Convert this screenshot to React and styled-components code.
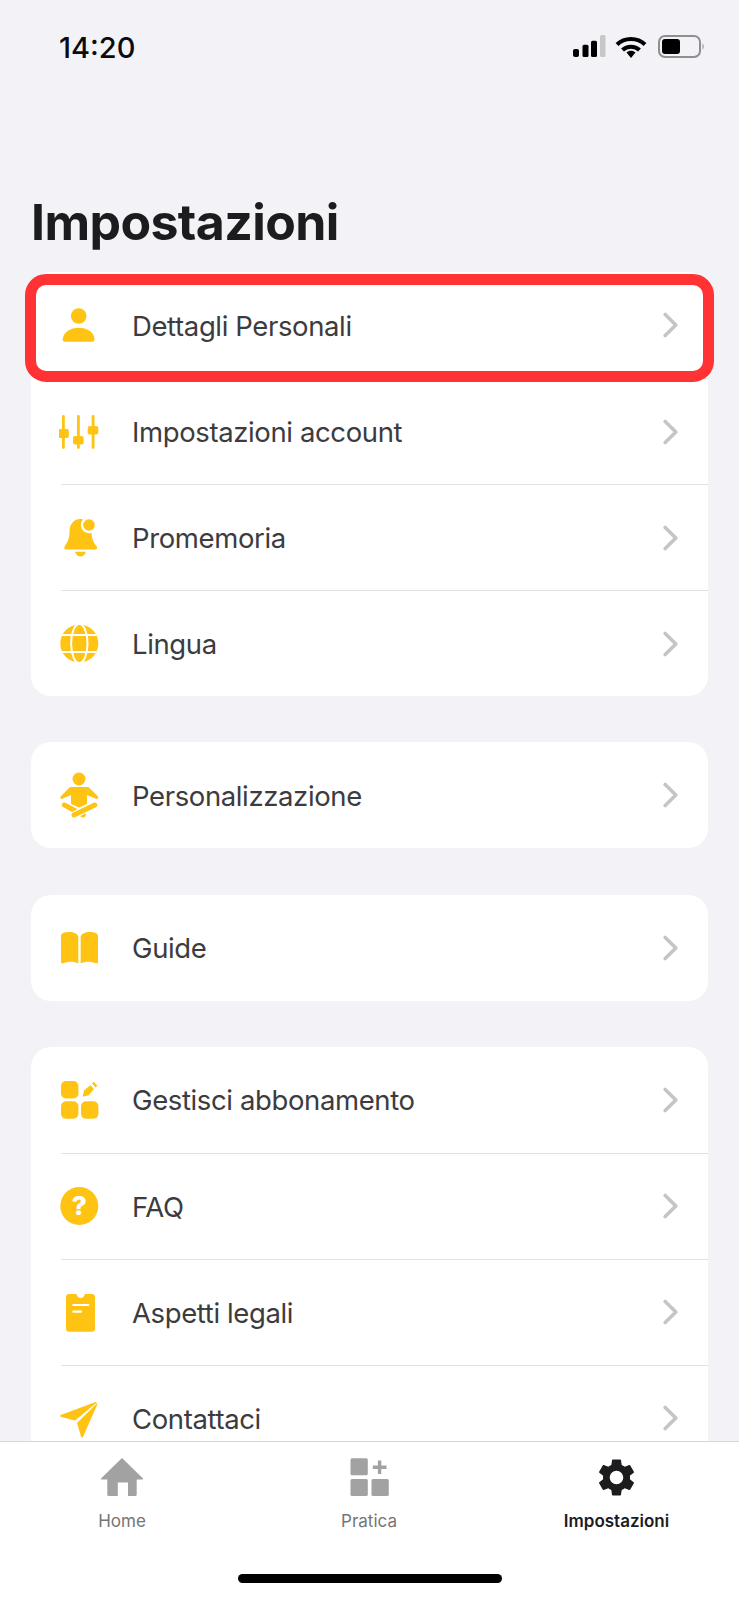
import React from 'react';
import styled, { createGlobalStyle } from 'styled-components';
import { MdSettings } from 'react-icons/md';

const yellow = '#ffc313';

const GlobalStyle = createGlobalStyle`
  html, body {
    margin: 0;
    padding: 0;
    background: #f2f2f7;
  }
  * { box-sizing: border-box; }
`;

const Screen = styled.div`
  width: 739px;
  height: 1600px;
  display: flex;
  flex-direction: column;
  overflow: hidden;
  background: #f2f2f7;
  font-family: Inter, "Liberation Sans", sans-serif;
`;

const StatusBar = styled.div`
  height: 94px;
  flex: none;
  display: flex;
  align-items: center;
  justify-content: space-between;
  padding: 0 34px 0 59px;
`;

const Time = styled.span`
  font-size: 29px;
  font-weight: 500;
  color: #0c0c0e;
`;

const StatusIcons = styled.div`
  display: flex;
  align-items: center;
  gap: 9px;
`;

const BatteryIcon = styled.svg`
  margin-left: 2px;
`;

const Header = styled.div`
  height: 178px;
  flex: none;
  padding: 97px 0 0 31px;
`;

const Title = styled.h1`
  margin: 0;
  font-size: 50px;
  line-height: 62px;
  font-weight: 700;
  letter-spacing: -0.6px;
  color: #1c1c1e;
`;

const List = styled.div`
  flex: 1;
  min-height: 0;
  overflow: hidden;
  padding: 0 31px;
  display: flex;
  flex-direction: column;
  gap: 46.25px;
`;

const Card = styled.div`
  position: relative;
  flex: none;
  background: #fff;
  border-radius: 20px;
`;

const Row = styled.div`
  height: 106px;
  margin-left: 30px;
  display: flex;
  align-items: center;
  padding-right: 30px;

  & + & {
    border-top: 1.5px solid #e2e2e4;
  }
`;

const IconSlot = styled.svg`
  width: 40px;
  height: 48px;
  flex: none;
  margin-left: -2px;
  fill: ${yellow};
`;

const Label = styled.span`
  flex: 1;
  margin-left: 33px;
  padding-top: 1px;
  font-size: 27.5px;
  letter-spacing: -0.38px;
  color: #3c3c3f;
`;

const Chevron = styled.svg`
  width: 15px;
  height: 26px;
  flex: none;
`;

const Highlight = styled.div`
  position: absolute;
  top: 2px;
  left: -6px;
  right: -6px;
  height: 108px;
  border: 11px solid #ff3333;
  border-radius: 21px;
`;

const TabBar = styled.div`
  flex: none;
  height: 159px;
  background: #fff;
  border-top: 1.5px solid #d6d6d9;
`;

const Tabs = styled.div`
  display: grid;
  grid-template-columns: 244px 250px 245px;
  padding-top: 15px;
`;

const Tab = styled.div`
  display: flex;
  flex-direction: column;
  align-items: center;
  color: ${(p) => (p.$active ? '#1c1c1e' : '#a2a2a2')};
`;

const TabIcon = styled.svg`
  width: 44px;
  height: 40px;
  fill: currentColor;
`;

const GearWrap = styled.div`
  height: 40px;
  display: flex;
  align-items: center;
  justify-content: center;
  font-size: 45px;
`;

const TabLabel = styled.span`
  margin-top: 14px;
  font-size: 17px;
  line-height: 20px;
  font-weight: ${(p) => (p.$active ? 600 : 400)};
  color: ${(p) => (p.$active ? '#1c1c1e' : '#757575')};
`;

const HomeIndicator = styled.div`
  width: 264px;
  height: 9px;
  margin: 43px auto 0;
  border-radius: 5px;
  background: #000;
`;

const Signal = () => (
  <svg width="33" height="24" viewBox="0 0 33 24">
    <rect x="0" y="14" width="6" height="8" rx="2" fill="#000" />
    <rect x="9.5" y="9.7" width="6" height="12.3" rx="1.5" fill="#000" />
    <rect x="18" y="5.7" width="6" height="16.3" rx="1.5" fill="#000" />
    <rect x="27" y="0" width="5.5" height="22" rx="1.5" fill="#c7c7c9" />
  </svg>
);

const Wifi = () => (
  <svg width="32" height="24" viewBox="0 0 32 24" fill="none" stroke="#000" strokeWidth="4">
    <path d="M2 9.5 C9.5 2 22.5 2 30 9.5" />
    <path d="M7.5 15 C12 10.5 20 10.5 24.5 15" />
    <path d="M11.5 17.5 L16 23 L20.5 17.5 C18 15.3 14 15.3 11.5 17.5Z" fill="#000" stroke="none" />
  </svg>
);

const Battery = () => (
  <BatteryIcon width="47" height="24" viewBox="0 0 47 24">
    <rect x="1" y="1" width="41" height="21" rx="6" fill="none" stroke="#8e8e93" strokeWidth="2" />
    <rect x="4" y="4" width="18" height="15" rx="3" fill="#000" />
    <path d="M44.5 8.5 C46 9.5 46 13.5 44.5 14.5Z" fill="#8e8e93" />
  </BatteryIcon>
);

const icons = {
  person: (
    <>
      <circle cx="19.7" cy="15" r="7.8" />
      <path d="M3.7 38 C4.5 31 11.5 26.7 19.7 26.7 C28 26.7 35 31 35.5 38 C35.6 39.8 34.8 40.7 33 40.7 H6 C4.4 40.7 3.5 39.8 3.7 38Z" />
    </>
  ),
  sliders: (
    <>
      <rect x="3" y="7" width="2.8" height="34" rx="1.4" />
      <rect x="18" y="7" width="2.8" height="34" rx="1.4" />
      <rect x="32.7" y="7" width="2.8" height="34" rx="1.4" />
      <rect x="-0.8" y="21" width="10.6" height="9" rx="2" />
      <rect x="14" y="28" width="10.6" height="8.5" rx="2" />
      <rect x="28.7" y="18" width="10.6" height="8.5" rx="2" />
    </>
  ),
  bell: (
    <>
      <path d="M21.5 5 C14 5 10.5 11 10.5 18 C10.5 25 8 29 5.8 32.2 C4.8 33.8 5.4 35.6 7 35.6 H36.5 C38 35.6 38.6 33.8 37.6 32.2 C35 29 32.5 25 32.5 18 C32.5 11 29 5 21.5 5Z" />
      <path d="M16 37.8 H27 C26 40.8 24 42.6 21.5 42.6 C19 42.6 17 40.8 16 37.8Z" />
      <circle cx="30" cy="11" r="8.2" fill="#fff" />
      <circle cx="30" cy="11" r="5.8" />
    </>
  ),
  globe: (
    <>
      <circle cx="20.3" cy="23.5" r="19" />
      <g fill="none" stroke="#fff" strokeWidth="2">
        <ellipse cx="20.3" cy="23.5" rx="8.2" ry="19.5" />
        <path d="M3 15 H37.6 M3 32 H37.6" />
      </g>
    </>
  ),
  yoga: (
    <>
      <circle cx="20" cy="8" r="6.5" />
      <path d="M12 16 H28.5 C29.8 16 30.6 16.7 31.2 17.8 L38.8 25.3 C40 26.6 38.6 28.6 37 27.8 L28 24 V33 L20 36.5 L12 33 V24 L3.4 27.8 C1.8 28.6 0.6 26.6 1.8 25.3 L9.3 17.8 C9.9 16.7 10.8 16 12 16Z" />
      <path d="M5.3 34 L24.3 44" fill="none" stroke={yellow} strokeWidth="5" strokeLinecap="round" />
      <path d="M36.7 33 L14.3 44.5" fill="none" stroke="#fff" strokeWidth="7.5" />
      <path d="M35.7 34 L15 44" fill="none" stroke={yellow} strokeWidth="5" strokeLinecap="round" />
    </>
  ),
  book: (
    <>
      <path d="M19.3 13 C19 10 15 8 10 8 C5.5 8 2 9.3 2 12 V38 C2 39.2 3 39.6 4 39.2 C9 37.2 15 37 19.3 39.6Z" />
      <path d="M21.7 13 C22 10 26 8 31 8 C35.5 8 39 9.3 39 12 V38 C39 39.2 38 39.6 37 39.2 C32 37.2 26 37 21.7 39.6Z" />
    </>
  ),
  manage: (
    <>
      <rect x="2" y="5" width="17.4" height="17.4" rx="5" />
      <rect x="2" y="25.3" width="17.4" height="17.4" rx="5" />
      <rect x="22" y="25.3" width="17.4" height="17.4" rx="5" />
      <path d="M23.7 20.7 L25 14.6 L31.5 9 L35 13.2 L29.5 19.2Z" />
      <path d="M33 7.3 L34.8 5.8 L38.4 9.8 L36.6 11.4Z" />
    </>
  ),
  faq: (
    <>
      <circle cx="20.3" cy="24" r="19" />
      <text x="20.3" y="33" textAnchor="middle" fontSize="26" fontWeight="800" fill="#fff" fontFamily="Inter, sans-serif">?</text>
    </>
  ),
  legal: (
    <>
      <path d="M10 6 H17.5 C17.8 8.2 19.5 10 21.7 10 C23.9 10 25.6 8.2 25.9 6 H33 C34.8 6 36 7.2 36 9 V40.7 C36 42.5 34.8 43.7 33 43.7 H10 C8.2 43.7 7 42.5 7 40.7 V9 C7 7.2 8.2 6 10 6Z" />
      <path d="M14.3 17 H29.3 M14.3 23.7 H22" stroke="#fff" strokeWidth="2.2" strokeLinecap="round" />
    </>
  ),
  send: (
    <>
      <path d="M36 8.2 C37.3 7.7 38 8.3 37.3 9 L16 26.6 L2.3 23 C0.8 22.6 0.8 21.4 2.3 20.8Z" />
      <path d="M38.3 10.5 C38.8 9.3 38.2 8.8 37.5 9.8 L18 29 L22 42.5 C22.4 44 23.6 44 24.2 42.6Z" />
    </>
  ),
};

const groups = [
  [
    ['person', 'Dettagli Personali'],
    ['sliders', 'Impostazioni account'],
    ['bell', 'Promemoria'],
    ['globe', 'Lingua'],
  ],
  [['yoga', 'Personalizzazione']],
  [['book', 'Guide']],
  [
    ['manage', 'Gestisci abbonamento'],
    ['faq', 'FAQ'],
    ['legal', 'Aspetti legali'],
    ['send', 'Contattaci'],
  ],
];

const SettingRow = ({ icon, label }) => (
  <Row>
    <IconSlot viewBox="0 0 40 48">{icons[icon]}</IconSlot>
    <Label>{label}</Label>
    <Chevron viewBox="0 0 15 26" fill="none" stroke="#c5c5c7" strokeWidth="3.6" strokeLinecap="round" strokeLinejoin="round">
      <path d="M2.2 2.5 L12.8 13 L2.2 23.5" />
    </Chevron>
  </Row>
);

export default function App() {
  return (
    <Screen>
      <GlobalStyle />
      <StatusBar>
        <Time>14:20</Time>
        <StatusIcons>
          <Signal />
          <Wifi />
          <Battery />
        </StatusIcons>
      </StatusBar>
      <Header>
        <Title>Impostazioni</Title>
      </Header>
      <List>
        {groups.map((rows, i) => (
          <Card key={i}>
            {rows.map(([icon, label]) => (
              <SettingRow key={label} icon={icon} label={label} />
            ))}
            {i === 0 && <Highlight />}
          </Card>
        ))}
      </List>
      <TabBar>
        <Tabs>
          <Tab>
            <TabIcon viewBox="0 0 44 40">
              <path d="M22 1 L43 21.5 C43.3 22 43 22.5 42.5 22.5 H36.7 V37.5 C36.7 38.5 36 39 35 39 H28 V25.5 H17.8 V39 H9 C8 39 7.3 38.5 7.3 37.5 V22.5 H1.5 C1 22.5 0.7 22 1 21.5Z" />
            </TabIcon>
            <TabLabel>Home</TabLabel>
          </Tab>
          <Tab>
            <TabIcon viewBox="0 0 44 40">
              <rect x="3.5" y="1.3" width="17.3" height="17" rx="1.5" />
              <rect x="3.5" y="22" width="17.3" height="17" rx="1.5" />
              <rect x="24.5" y="22" width="17.3" height="17" rx="1.5" />
              <path d="M25.8 10.3 H39.5 M32.6 3.6 V17" stroke="currentColor" strokeWidth="3.4" fill="none" />
            </TabIcon>
            <TabLabel>Pratica</TabLabel>
          </Tab>
          <Tab $active>
            <GearWrap>
              <MdSettings />
            </GearWrap>
            <TabLabel $active>Impostazioni</TabLabel>
          </Tab>
        </Tabs>
        <HomeIndicator />
      </TabBar>
    </Screen>
  );
}
